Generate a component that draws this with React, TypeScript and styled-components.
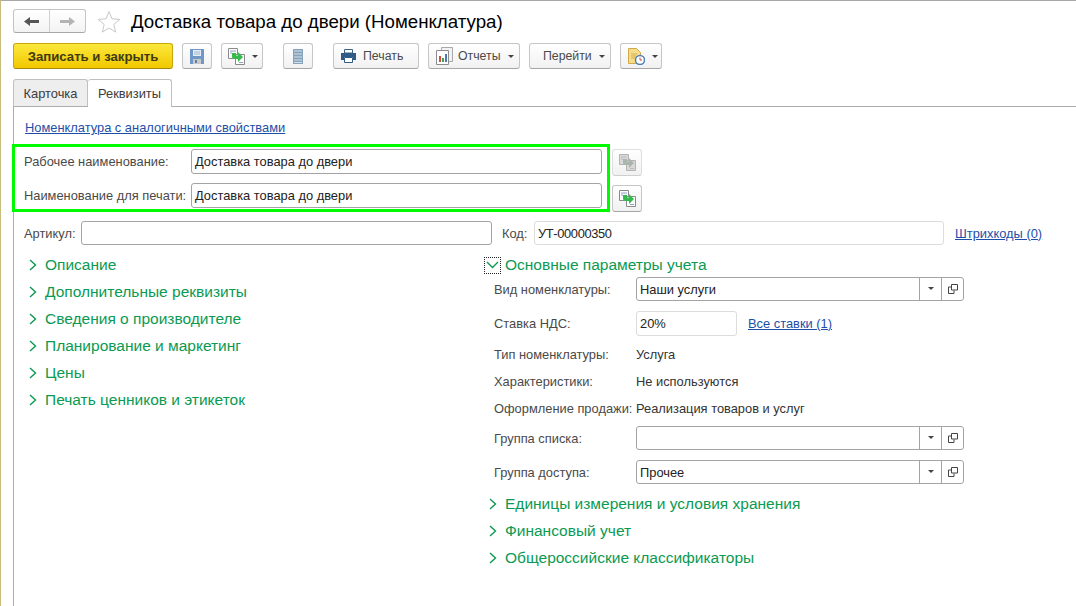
import styled, { createGlobalStyle } from "styled-components"

const GlobalStyle = createGlobalStyle`
  html, body {
    margin: 0;
    padding: 0;
    background: #fff;
  }
  body {
    font-family: "Liberation Sans", Arial, sans-serif;
    font-size: 12.87px;
    color: #3c3c3c;
  }
`

const Page = styled.div`
  width: 1076px;
  height: 606px;
  box-sizing: border-box;
  overflow: hidden;
  border-top: 1px solid #a8a8a8;
  border-left: 1px solid #c9bd7d;
  display: flex;
  flex-direction: column;
  background: #fff;
`

const Header = styled.div`
  display: flex;
  align-items: center;
  height: 24px;
  margin: 8px 0 0 12px;
`

const NavGroup = styled.div`
  display: flex;
  width: 73px;
  height: 24px;
  box-sizing: border-box;
  border: 1px solid #c4c4c4;
  border-bottom-color: #a8a8a8;
  border-radius: 3px;
  background: linear-gradient(#fff, #f3f3f3);
`

const NavCell = styled.div<{ $last?: boolean }>`
  flex: 1;
  display: flex;
  align-items: center;
  justify-content: center;
  border-left: ${(p) => (p.$last ? "1px solid #d0d0d0" : "none")};
`

const StarWrap = styled.div`
  display: flex;
  margin-left: 11px;
`

const Title = styled.h1`
  margin: 1px 0 0 10px;
  font-size: 18.7px;
  font-weight: normal;
  color: #000;
  white-space: nowrap;
`

const Toolbar = styled.div`
  display: flex;
  align-items: stretch;
  height: 26px;
  margin: 10px 0 0 12px;
`

const Btn = styled.div<{ $w: number; $ml?: number; $pl?: number }>`
  width: ${(p) => p.$w}px;
  margin-left: ${(p) => p.$ml ?? 9}px;
  padding-left: ${(p) => p.$pl ?? 0}px;
  box-sizing: border-box;
  display: flex;
  align-items: center;
  justify-content: ${(p) => (p.$pl ? "flex-start" : "center")};
  gap: 5px;
  flex-shrink: 0;
  border: 1px solid #c6c6c6;
  border-bottom-color: #a6a6a6;
  border-radius: 3px;
  background: linear-gradient(#fff, #f1f1f1);
  color: #4a4a4a;
  font-size: 12.3px;
  white-space: nowrap;
`

const PrimaryBtn = styled(Btn)`
  border-color: #c8a80a;
  border-bottom-color: #a58c10;
  background: linear-gradient(#fbe83c, #f2c800);
  color: #3f3a10;
  font-size: 13.2px;
  font-weight: bold;
`

const BtnLabel = styled.span<{ $ml?: number }>`
  margin-left: ${(p) => p.$ml ?? 0}px;
`

const Caret = styled.span`
  width: 0;
  height: 0;
  margin-left: 2px;
  border-left: 3px solid transparent;
  border-right: 3px solid transparent;
  border-top: 3px solid #444;
`

const Tabs = styled.div`
  display: flex;
  height: 28px;
  box-sizing: border-box;
  margin: 10px 0 0 12px;
  border-bottom: 1px solid #adadad;
`

const Tab = styled.div<{ $active?: boolean; $w: number }>`
  width: ${(p) => p.$w}px;
  height: ${(p) => (p.$active ? 28 : 27)}px;
  box-sizing: border-box;
  display: flex;
  align-items: center;
  justify-content: center;
  border: 1px solid #c0c0c0;
  border-left: ${(p) => (p.$active ? "none" : "1px solid #c0c0c0")};
  border-bottom: none;
  border-radius: 3px 3px 0 0;
  background: ${(p) => (p.$active ? "#fff" : "#eeeeee")};
  color: #3c3c3c;
`

const Body = styled.div`
  flex: 1;
  margin-left: 12px;
  border-left: 1px solid #adadad;
`

const LinkRow = styled.div`
  height: 37px;
  padding: 14px 0 0 11px;
  box-sizing: border-box;
  line-height: 14px;
`

const Link = styled.a<{ $ml?: number }>`
  margin-left: ${(p) => p.$ml ?? 0}px;
  color: #1d4fa8;
  text-decoration: underline;
  white-space: nowrap;
`

const NameBlock = styled.div`
  display: flex;
  margin-left: -2px;
`

const HighlightBox = styled.div`
  width: 598px;
  box-sizing: border-box;
  border: 3px solid #00fa00;
  padding: 2px 5px 1px 9px;
  display: flex;
  flex-direction: column;
  gap: 9px;
`

const NameRow = styled.div`
  display: flex;
  align-items: center;
`

const Label = styled.span<{ $w: number; $ml?: number }>`
  width: ${(p) => p.$w}px;
  margin-left: ${(p) => p.$ml ?? 0}px;
  flex-shrink: 0;
  white-space: nowrap;
  color: #4a4a4a;
`

const Input = styled.div<{ $w?: number; $h?: number; $light?: boolean }>`
  flex: ${(p) => (p.$w ? "none" : 1)};
  width: ${(p) => (p.$w ? `${p.$w}px` : "auto")};
  height: ${(p) => p.$h ?? 25}px;
  box-sizing: border-box;
  padding-left: 3px;
  display: flex;
  align-items: center;
  border: 1px solid ${(p) => (p.$light ? "#dcdcdc" : "#a4a4a4")};
  border-radius: 3px;
  background: #fff;
  color: #222;
  white-space: nowrap;
`

const CodeInput = styled(Input)`
  letter-spacing: -0.35px;
`

const SideButtons = styled.div`
  display: flex;
  flex-direction: column;
  gap: 9px;
  margin: 5px 0 0 2px;
`

const SideButton = styled.div<{ $off?: boolean }>`
  width: 30px;
  height: 27px;
  box-sizing: border-box;
  display: flex;
  align-items: center;
  justify-content: center;
  border: 1px solid ${(p) => (p.$off ? "#dedede" : "#c6c6c6")};
  border-bottom-color: ${(p) => (p.$off ? "#cfcfcf" : "#a6a6a6")};
  border-radius: 3px;
  background: linear-gradient(#fff, #f1f1f1);
`

const CodeRow = styled.div`
  display: flex;
  align-items: center;
  margin-top: 9px;
  padding-left: 10px;
  height: 24px;
`

const Columns = styled.div`
  display: flex;
  margin-top: 6px;
`

const LeftColumn = styled.div`
  width: 470px;
  margin-top: -1px;
  padding-left: 15px;
  box-sizing: border-box;
`

const RightColumn = styled.div`
  flex: 1;
`

const Section = styled.div<{ $pad?: number }>`
  display: flex;
  align-items: center;
  gap: 8px;
  height: 27px;
  box-sizing: border-box;
  padding-top: 2px;
  padding-left: ${(p) => p.$pad ?? 0}px;
  color: #0a9a52;
  font-size: 15.5px;
  white-space: nowrap;
`

const OpenSection = styled(Section)`
  height: 16px;
  margin-top: 5px;
  gap: 4px;
`

const FocusBox = styled.span`
  width: 17px;
  height: 17px;
  box-sizing: border-box;
  display: flex;
  align-items: center;
  justify-content: center;
  border: 1px dotted #222;
`

const FieldRow = styled.div<{ $text?: boolean }>`
  display: flex;
  align-items: center;
  height: ${(p) => (p.$text ? 27 : 34)}px;
  box-sizing: border-box;
  padding-left: 10px;
  padding-top: ${(p) => (p.$text ? 2 : 0)}px;
`

const Value = styled.span`
  color: #333;
  white-space: nowrap;
`

const Select = styled.div`
  width: 328px;
  height: 24px;
  box-sizing: border-box;
  display: flex;
  border: 1px solid #a4a4a4;
  border-radius: 3px;
  color: #222;
`

const SelectText = styled.div`
  flex: 1;
  padding-left: 3px;
  display: flex;
  align-items: center;
`

const SelectCell = styled.div`
  width: 21px;
  display: flex;
  align-items: center;
  justify-content: center;
  border-left: 1px solid #a4a4a4;
`

const SmallCaret = styled.span`
  width: 0;
  height: 0;
  margin-top: -2px;
  border-left: 3px solid transparent;
  border-right: 3px solid transparent;
  border-top: 3px solid #444;
`

function Chevron() {
  return (
    <svg width="8" height="12" viewBox="0 0 8 12">
      <path d="M1 1l5.5 5L1 11" fill="none" stroke="#0a9a52" strokeWidth="1.4" />
    </svg>
  )
}

function ChevronDown() {
  return (
    <svg width="13" height="8" viewBox="0 0 13 8">
      <path d="M1 1l5.5 5.5L12 1" fill="none" stroke="#0a9a52" strokeWidth="1.4" />
    </svg>
  )
}

function OpenIcon() {
  return (
    <svg width="10" height="10" viewBox="0 0 10 10">
      <path d="M3.500.5h6V6h-6zM3.500 3H.5v6.500H6V6.500" fill="none" stroke="#444" />
    </svg>
  )
}

function ArrowLeftIcon() {
  return (
    <svg width="15" height="9" viewBox="0 0 15 9">
      <path d="M15 3H6V0L0 4.500 6 9V6h9z" fill="#555" />
    </svg>
  )
}

function ArrowRightIcon() {
  return (
    <svg width="15" height="9" viewBox="0 0 15 9">
      <path d="M0 3h9V0l6 4.500L9 9V6H0z" fill="#b4b4b4" />
    </svg>
  )
}

function StarIcon() {
  return (
    <svg width="24" height="23" viewBox="0 0 24 23">
      <path d="M12 1.500l3 7.300 7.800.6-6 5.100 1.900 7.600L12 18l-6.700 4.100 1.900-7.600-6-5.100 7.800-.6z" fill="#fff" stroke="#c8c8c8" />
    </svg>
  )
}

function SaveIcon() {
  return (
    <svg width="14" height="15" viewBox="0 0 14 15">
      <path d="M0 0h14v15H0z" fill="#6f98c6" />
      <path d="M3 1h8v6H3z" fill="#e6edf5" />
      <path d="M4 3h6M4 5h6" stroke="#9db6d2" />
      <path d="M3 10h8v5H3z" fill="#c9c9c9" />
      <path d="M5 11h2v3H5z" fill="#5d7fa8" />
    </svg>
  )
}

function CopyIcon({ off }: { off?: boolean }) {
  const line = off ? "#b4b4b4" : "#8a8a8a"
  const fill = off ? "#d9d9d9" : "#fff"
  const arrow = off ? "#a9b5ad" : "#35bb4c"
  return (
    <svg width="17" height="17" viewBox="0 0 17 17">
      <path d="M.5.5h9v10h-9z" fill={fill} stroke={line} />
      <path d="M7.500 6.500h9v10h-9z" fill={fill} stroke={line} />
      <path d="M2 3h6M2 5h2M11 14.500h4" stroke={off ? "#bbb" : "#8ca0c0"} />
      <path d="M4 5h4v2.500h2V4l5 5-5 5v-3H6.500A2.500 2.500 0 0 1 4 8.500z" fill={arrow} />
    </svg>
  )
}

function ListIcon() {
  return (
    <svg width="10" height="15" viewBox="0 0 10 15">
      <path d="M0 0h10v15H0z" fill="#86a3bb" />
      <path d="M1 2h8M1 5h8M1 8h8M1 11h8M1 13.500h8" stroke="#d5e0ea" />
    </svg>
  )
}

function PrintIcon() {
  return (
    <svg width="15" height="14" viewBox="0 0 15 14">
      <path d="M3.500.5h8V4h-8z" fill="#fff" stroke="#3d6288" />
      <path d="M0 4h15v7h-3V8H3v3H0z" fill="#2f5a86" />
      <path d="M3.500 8.500h8v5h-8z" fill="#fff" stroke="#2f5a86" />
    </svg>
  )
}

function ReportIcon() {
  return (
    <svg width="17" height="18" viewBox="0 0 17 18">
      <path d="M5.500.5h11v14h-11z" fill="#f2f2f2" stroke="#a8a8a8" />
      <path d="M.5 3.500h12v14H.5z" fill="#fff" stroke="#8c8c8c" />
      <path d="M3 9h2v6H3z" fill="#d84a3a" />
      <path d="M6 11h2v4H6z" fill="#3aa655" />
      <path d="M9 7h2v8H9z" fill="#4a78b5" />
    </svg>
  )
}

function ScheduleIcon() {
  return (
    <svg width="17" height="17" viewBox="0 0 17 17">
      <path d="M.5.5h8l4 4v11H.5z" fill="#f7dc8a" stroke="#d0a94a" />
      <path d="M3 6h6M3 8h5M3 10h4" stroke="#d3ad55" />
      <circle cx="12" cy="12" r="4.500" fill="#fff" stroke="#4f7fb8" strokeWidth="1.500" />
      <path d="M12 9.500V12h2" fill="none" stroke="#d04a3a" />
    </svg>
  )
}

const sections = [
  "Описание",
  "Дополнительные реквизиты",
  "Сведения о производителе",
  "Планирование и маркетинг",
  "Цены",
  "Печать ценников и этикеток",
]

const subSections = ["Единицы измерения и условия хранения", "Финансовый учет", "Общероссийские классификаторы"]

function SelectField({ value }: { value?: string }) {
  return (
    <Select>
      <SelectText>{value}</SelectText>
      <SelectCell>
        <SmallCaret />
      </SelectCell>
      <SelectCell>
        <OpenIcon />
      </SelectCell>
    </Select>
  )
}

export default function App() {
  return (
    <Page>
      <GlobalStyle />
      <Header>
        <NavGroup>
          <NavCell>
            <ArrowLeftIcon />
          </NavCell>
          <NavCell $last>
            <ArrowRightIcon />
          </NavCell>
        </NavGroup>
        <StarWrap>
          <StarIcon />
        </StarWrap>
        <Title>Доставка товара до двери (Номенклатура)</Title>
      </Header>

      <Toolbar>
        <PrimaryBtn $w={160} $ml={0}>Записать и закрыть</PrimaryBtn>
        <Btn $w={30}>
          <SaveIcon />
        </Btn>
        <Btn $w={42} $pl={6}>
          <CopyIcon />
          <Caret />
        </Btn>
        <Btn $w={30} $ml={20}>
          <ListIcon />
        </Btn>
        <Btn $w={86} $ml={20} $pl={7}>
          <PrintIcon />
          <BtnLabel $ml={2}>Печать</BtnLabel>
        </Btn>
        <Btn $w={92} $pl={7}>
          <ReportIcon />
          <BtnLabel>Отчеты</BtnLabel>
          <Caret />
        </Btn>
        <Btn $w={82} $pl={13}>
          <BtnLabel>Перейти</BtnLabel>
          <Caret />
        </Btn>
        <Btn $w={42} $pl={7}>
          <ScheduleIcon />
          <Caret />
        </Btn>
      </Toolbar>

      <Tabs>
        <Tab $w={75}>Карточка</Tab>
        <Tab $w={84} $active>Реквизиты</Tab>
      </Tabs>

      <Body>
        <LinkRow>
          <Link>Номенклатура с аналогичными свойствами</Link>
        </LinkRow>

        <NameBlock>
          <HighlightBox>
            <NameRow>
              <Label $w={167}>Рабочее наименование:</Label>
              <Input>Доставка товара до двери</Input>
            </NameRow>
            <NameRow>
              <Label $w={167}>Наименование для печати:</Label>
              <Input>Доставка товара до двери</Input>
            </NameRow>
          </HighlightBox>
          <SideButtons>
            <SideButton $off>
              <CopyIcon off />
            </SideButton>
            <SideButton>
              <CopyIcon />
            </SideButton>
          </SideButtons>
        </NameBlock>

        <CodeRow>
          <Label $w={57}>Артикул:</Label>
          <Input $w={411} $h={24}></Input>
          <Label $w={32} $ml={10}>Код:</Label>
          <CodeInput $w={410} $h={24} $light>УТ-00000350</CodeInput>
          <Link $ml={11}>Штрихкоды (0)</Link>
        </CodeRow>

        <Columns>
          <LeftColumn>
            {sections.map((s) => (
              <Section key={s}>
                <Chevron />
                {s}
              </Section>
            ))}
          </LeftColumn>
          <RightColumn>
            <OpenSection>
              <FocusBox>
                <ChevronDown />
              </FocusBox>
              Основные параметры учета
            </OpenSection>
            <FieldRow>
              <Label $w={142}>Вид номенклатуры:</Label>
              <SelectField value="Наши услуги" />
            </FieldRow>
            <FieldRow>
              <Label $w={142}>Ставка НДС:</Label>
              <Input $w={101} $light>20%</Input>
              <Link $ml={11}>Все ставки (1)</Link>
            </FieldRow>
            <FieldRow $text>
              <Label $w={142}>Тип номенклатуры:</Label>
              <Value>Услуга</Value>
            </FieldRow>
            <FieldRow $text>
              <Label $w={142}>Характеристики:</Label>
              <Value>Не используются</Value>
            </FieldRow>
            <FieldRow $text>
              <Label $w={142}>Оформление продажи:</Label>
              <Value>Реализация товаров и услуг</Value>
            </FieldRow>
            <FieldRow>
              <Label $w={142}>Группа списка:</Label>
              <SelectField />
            </FieldRow>
            <FieldRow>
              <Label $w={142}>Группа доступа:</Label>
              <SelectField value="Прочее" />
            </FieldRow>
            {subSections.map((s) => (
              <Section key={s} $pad={5}>
                <Chevron />
                {s}
              </Section>
            ))}
          </RightColumn>
        </Columns>
      </Body>
    </Page>
  )
}
